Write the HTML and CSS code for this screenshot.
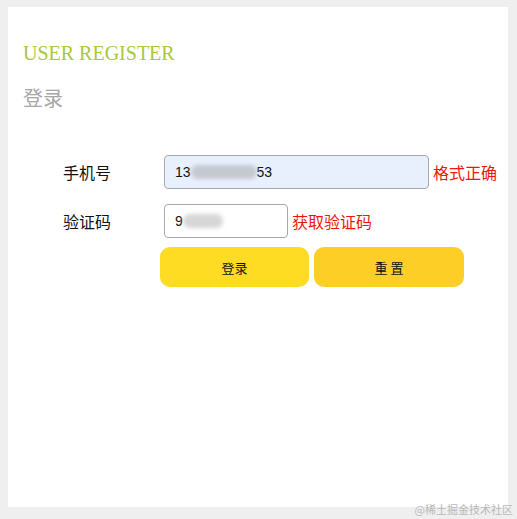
FILE: index.html
```html
<!DOCTYPE html>
<html lang="zh">
<head>
<meta charset="utf-8">
<link rel="stylesheet" href="styles.css">
</head>
<body>
<div class="panel">
  <h1 class="title">USER REGISTER</h1>
  <h2 class="subtitle">登录</h2>
  <form class="form">
    <div class="row">
      <label class="label">手机号</label>
      <div class="field field-phone">
        <span class="val">13</span><span class="blur b1"></span><span class="val val-end">53</span>
      </div>
      <span class="hint">格式正确</span>
    </div>
    <div class="row">
      <label class="label">验证码</label>
      <div class="field field-code">
        <span class="val">9</span><span class="blur b2"></span>
      </div>
      <span class="hint">获取验证码</span>
    </div>
    <div class="actions">
      <button type="button" class="btn btn-login">登录</button>
      <button type="button" class="btn btn-reset">重 置</button>
    </div>
  </form>
</div>
<div class="watermark">@稀土掘金技术社区</div>
</body>
</html>
```
FILE: styles.css
```css
html, body {
  margin: 0;
  padding: 0;
}
body {
  background: #efefef;
  width: 517px;
  height: 519px;
  position: relative;
  font-family: "Noto Sans CJK SC", "Liberation Sans", sans-serif;
}
.panel {
  position: relative;
  top: 7px;
  margin-left: 8px;
  width: 500px;
  height: 500px;
  background: #ffffff;
  padding: 0 15px;
  box-sizing: border-box;
}
.title {
  margin: 0;
  padding-top: 34px;
  font-family: "Liberation Serif", serif;
  font-weight: normal;
  font-size: 20px;
  line-height: 24px;
  color: #a9c83a;
}
.subtitle {
  margin: 19px 0 0;
  font-family: "Noto Sans CJK SC", sans-serif;
  font-weight: normal;
  font-size: 20px;
  line-height: 28px;
  color: #a6a6a6;
}
.form {
  margin-top: 43px;
  padding-left: 40px;
}
.row {
  display: flex;
  align-items: center;
  height: 34px;
  margin-bottom: 15px;
  white-space: nowrap;
}
.label {
  flex: 0 0 101px;
  font-size: 16px;
  color: #111;
}
.field {
  flex-shrink: 0;
  height: 34px;
  box-sizing: border-box;
  border: 1px solid #a9a9a9;
  border-radius: 4px;
  display: flex;
  align-items: center;
  padding-left: 10px;
  font-family: "Liberation Sans", sans-serif;
  font-size: 14px;
  color: #111;
}
.field-phone {
  width: 265px;
  background: #e8f0fe;
}
.field-code {
  width: 124px;
  background: #fff;
}
.blur {
  display: inline-block;
  height: 14px;
  background: #c4c8cf;
  border-radius: 7px;
  filter: blur(2px);
}
.b1 { width: 66px; }
.b2 { width: 40px; background: #d6d6d6; }
.hint {
  flex-shrink: 0;
  margin-left: 4px;
  font-size: 16px;
  color: #e8180c;
}
.actions {
  display: flex;
  gap: 5px;
  margin-left: 97px;
  margin-top: -6px;
}
.btn {
  flex-shrink: 0;
  width: 149px;
  height: 40px;
  border: 0;
  border-radius: 10px;
  font-family: "Noto Sans CJK SC", sans-serif;
  font-size: 13px;
  color: #111;
  cursor: pointer;
}
.btn-login { background: #fedc24; }
.btn-reset { background: #fdcf26; width: 150px; }
.watermark {
  position: absolute;
  right: 4px;
  bottom: 2px;
  font-family: "Noto Sans CJK SC", serif;
  font-size: 11px;
  color: #b9b9b9;
}
```
